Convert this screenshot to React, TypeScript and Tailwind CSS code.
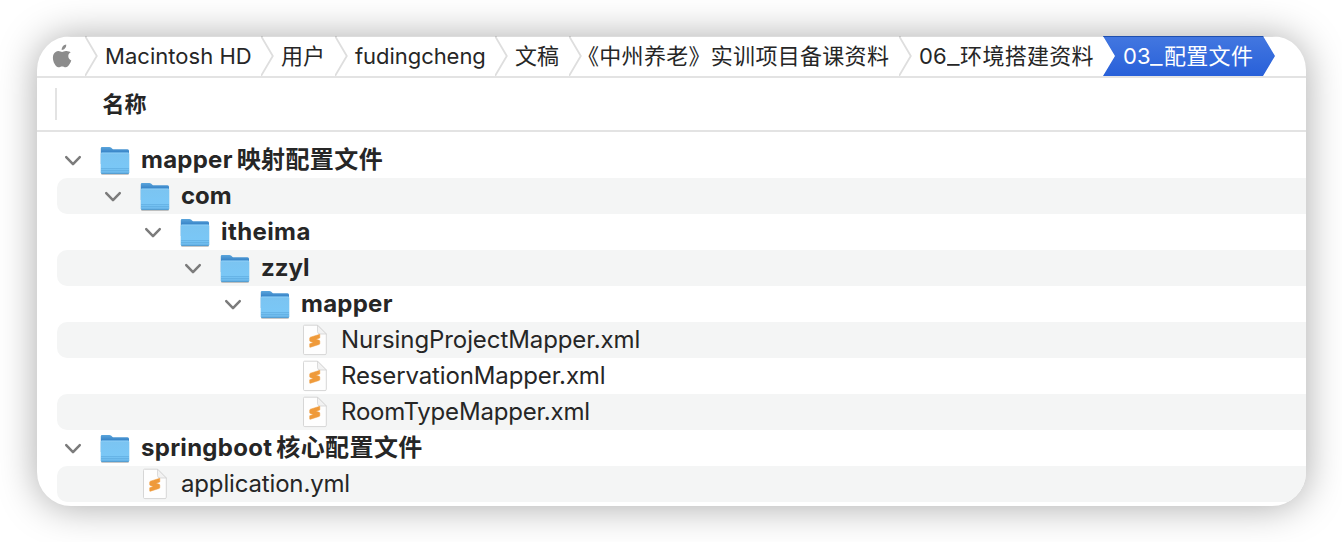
import React from "react";

type Run = { text: string; className: string };
type Crumb = { width: string; pad: string; runs: Run[] };
type Row = { kind: "folder" | "file"; indent: string; runs: Run[] };

const crumbs: Crumb[] = [
  { width: "w-[176px]", pad: "pl-[20px]", runs: [{ text: "Macintosh HD", className: "tracking-[0.03px]" }] },
  { width: "w-[74px]", pad: "pl-[20px]", runs: [{ text: "用户", className: "" }] },
  { width: "w-[160px]", pad: "pl-[20px]", runs: [{ text: "fudingcheng", className: "tracking-[-0.05px]" }] },
  { width: "w-[74px]", pad: "pl-[20px]", runs: [{ text: "文稿", className: "" }] },
  { width: "w-[330px]", pad: "pl-[8px]", runs: [{ text: "《中州养老》实训项目备课资料", className: "tracking-[0.3px]" }] },
  {
    width: "w-[204px]",
    pad: "pl-[20px]",
    runs: [
      { text: "06", className: "tracking-[0px]" },
      { text: "_", className: "inline-block origin-left scale-x-[1.25] mr-[3.5px]" },
      { text: "环境搭建资料", className: "tracking-[0.3px]" },
    ],
  },
];

const rows: Row[] = [
  {
    kind: "folder",
    indent: "pl-[26px]",
    runs: [
      { text: "mapper", className: "font-bold tracking-[0.25px]" },
      { text: "映射配置文件", className: "ml-[4px] tracking-[0.4px]" },
    ],
  },
  { kind: "folder", indent: "pl-[66px]", runs: [{ text: "com", className: "font-bold" }] },
  { kind: "folder", indent: "pl-[106px]", runs: [{ text: "itheima", className: "font-bold tracking-[0.4px]" }] },
  { kind: "folder", indent: "pl-[146px]", runs: [{ text: "zzyl", className: "font-bold" }] },
  { kind: "folder", indent: "pl-[186px]", runs: [{ text: "mapper", className: "font-bold tracking-[0.25px]" }] },
  { kind: "file", indent: "pl-[226px]", runs: [{ text: "NursingProjectMapper.xml", className: "tracking-[-0.09px]" }] },
  { kind: "file", indent: "pl-[226px]", runs: [{ text: "ReservationMapper.xml", className: "tracking-[-0.13px]" }] },
  { kind: "file", indent: "pl-[226px]", runs: [{ text: "RoomTypeMapper.xml", className: "tracking-[-0.19px]" }] },
  {
    kind: "folder",
    indent: "pl-[26px]",
    runs: [
      { text: "springboot", className: "font-bold tracking-[0.28px]" },
      { text: "核心配置文件", className: "ml-[4px] tracking-[0.4px]" },
    ],
  },
  { kind: "file", indent: "pl-[66px]", runs: [{ text: "application.yml", className: "tracking-[-0.16px]" }] },
];

function Runs({ runs }: { runs: Run[] }) {
  return (
    <>
      {runs.map((run) => (
        <span key={run.text} className={run.className}>
          {run.text}
        </span>
      ))}
    </>
  );
}

function AppleLogo() {
  return (
    <svg className="ml-[15px] h-[24px] w-[20px] shrink-0" viewBox="0 0 20 24" fill="#8c8c8c">
      <path d="M14.2 0.4c.2 1.5-.4 2.9-1.200 3.900-.8 1-2.100 1.700-3.300 1.600-.2-1.400.5-2.800 1.200-3.700C11.700 1.200 13.100.5 14.200.4z" />
      <path d="M18.700 8.300c-1.700 1-2.500 2.400-2.400 4 .1 2 1.200 3.500 3 4.200-.5 1.600-1.200 2.900-2.200 4.300-.9 1.300-1.900 2.500-3.400 2.500-1.400 0-1.900-.8-3.600-.8s-2.200.8-3.600.8c-1.400.1-2.500-1.300-3.400-2.600C1.300 18.100.1 13.500 1.600 10.300 2.500 8.200 4.400 6.900 6.400 6.900c1.500 0 2.700 1 3.700 1 .9 0 2.400-1.200 4.300-1 1.700.1 3.300.6 4.300 1.400z" />
    </svg>
  );
}

function Separator() {
  return (
    <svg className="absolute left-0 top-0 h-[40px] w-[14px]" viewBox="0 0 14 40" fill="none">
      <path d="M0 0 L11.800 20 L0 40" stroke="#dedede" strokeWidth="1.800" />
      <path d="M0 0h1.800" stroke="#b8b8b8" strokeWidth="1.500" />
    </svg>
  );
}

function Disclosure() {
  return (
    <svg className="h-[16px] w-[20px] shrink-0" viewBox="0 0 20 16" fill="none">
      <path
        d="M3.200 5.100 L10 12.200 L16.800 5.100"
        stroke="#7c7c7c"
        strokeWidth="2.500"
        strokeLinecap="round"
        strokeLinejoin="round"
      />
    </svg>
  );
}

function FolderIcon() {
  return (
    <svg className="h-[32px] w-[32px] shrink-0" viewBox="0 0 32 32">
      <defs>
        <linearGradient id="folder-back" x1="0" y1="0" x2="0" y2="1">
          <stop offset="0" stopColor="#5aa5dc" />
          <stop offset="0.300" stopColor="#3985c8" />
          <stop offset="1" stopColor="#3985c8" />
        </linearGradient>
        <linearGradient id="folder-front" x1="0" y1="0" x2="0" y2="1">
          <stop offset="0" stopColor="#7bc4f1" />
          <stop offset="0.700" stopColor="#7ac7f6" />
          <stop offset="1" stopColor="#69b6e9" />
        </linearGradient>
      </defs>
      <rect x="2" y="27" width="28" height="4" rx="1.500" fill="#000" opacity="0.220" />
      <path
        d="M1.800 4.200Q1.800 3 3 3H10.400Q11.300 3 12 3.600L13.300 4.800Q13.900 5.300 14.800 5.300H28.500Q30 5.300 30 6.800V20H1.800z"
        fill="url(#folder-back)"
      />
      <path d="M1.700 10Q1.700 8.500 3.200 8.500H28.800Q30.300 8.500 30.300 10V28.300Q30.300 29.800 28.800 29.800H3.200Q1.700 29.800 1.700 28.300z" fill="url(#folder-front)" />
      <path d="M2.200 9.100H29.800" fill="none" stroke="#93d3f8" strokeWidth="0.700" />
      <path d="M2 24.500H30M2 26.500H30" stroke="#5caadd" strokeWidth="0.600" />
      <path d="M2.400 29.400H29.600" stroke="#4c98ce" strokeWidth="0.900" />
    </svg>
  );
}

function FileIcon() {
  return (
    <svg className="h-[32px] w-[32px] shrink-0" viewBox="0 0 32 32">
      <path
        d="M5.500 1.200H18.500L27.300 10V29.300Q27.300 30.600 26 30.600H5.800Q4.500 30.600 4.500 29.300V2.400Q4.500 1.200 5.500 1.200z"
        fill="#fefefe"
        stroke="#d6d6d6"
        strokeWidth="1"
      />
      <path d="M18.500 1.200V7.500Q18.500 10 21 10H27.300z" fill="#f2f2f2" stroke="#cfcfcf" strokeWidth="0.700" />
      <path
        d="M20.800 10.300L11.400 13.200Q10.700 13.500 10.700 14.200V16.600Q10.700 17.300 11.300 17.500L14.300 18.600L10.700 19.800V22.900Q10.700 23.500 11.500 23.200L20 20.500Q20.800 20.200 20.800 19.400V17.200Q20.800 16.500 20.200 16.300L17 15.200L20.800 13.900z"
        fill="#ef9a3a"
        stroke="#ef9a3a"
        strokeWidth="0.500"
      />
    </svg>
  );
}

export default function App() {
  return (
    <div className="h-[542px] w-[1342px] overflow-hidden bg-white pl-[37px] pt-[36px] font-['Inter','Noto_Sans_CJK_SC',sans-serif] text-[#262626]">
      <div className="flex h-[470px] w-[1269px] flex-col overflow-hidden rounded-[34px] bg-white shadow-[0_1px_38px_rgba(0,0,0,0.340)]">
        <nav className="flex h-[42px] shrink-0 whitespace-nowrap border-b-2 border-[#e3e3e3] text-[22px] leading-[40px] shadow-[inset_0_1px_0_#dcdcdc]">
          <div className="flex w-[48px] shrink-0 items-center">
            <AppleLogo />
          </div>
          {crumbs.map((crumb, i) => (
            <div key={i} className={`relative h-[40px] shrink-0 ${crumb.width} ${crumb.pad}`}>
              <Separator />
              <Runs runs={crumb.runs} />
            </div>
          ))}
          <div className="h-[40px] w-[172px] shrink-0 bg-linear-to-b from-[#4377e0] to-[#2860d9] pl-[20px] text-white shadow-[inset_0_1px_0_#1f4fae] [clip-path:polygon(0_0,160px_0,100%_50%,160px_100%,0_100%,12px_50%)]">
            <span>03</span>
            <span className="mr-[3.5px] inline-block origin-left scale-x-[1.25]">_</span>
            <span className="tracking-[0.3px]">配置文件</span>
          </div>
        </nav>
        <header className="flex h-[54px] shrink-0 items-center border-b-2 border-[#e3e3e3] pl-[18px]">
          <div className="h-[32px] w-[2px] bg-[#e3e3e3]" />
          <span className="ml-[45.5px] text-[22px] font-bold leading-[52px]">名称</span>
        </header>
        <div className="flex flex-col pt-[10px]">
          {rows.map((row, i) => (
            <div key={i} className={`ml-[20px] h-[36px] rounded-l-[10px] ${i % 2 ? "bg-[#f4f5f5]" : ""}`}>
              <div className={`-ml-[20px] flex h-full items-center ${row.indent}`}>
                {row.kind === "folder" ? <Disclosure /> : <div className="w-[20px]" />}
                <div className="ml-[16px] flex">{row.kind === "folder" ? <FolderIcon /> : <FileIcon />}</div>
                <div
                  className={`ml-[10px] flex items-baseline whitespace-nowrap leading-[36px] ${
                    row.kind === "folder" ? "text-[24px] font-semibold" : "text-[24px]"
                  }`}
                >
                  <Runs runs={row.runs} />
                </div>
              </div>
            </div>
          ))}
        </div>
      </div>
    </div>
  );
}
